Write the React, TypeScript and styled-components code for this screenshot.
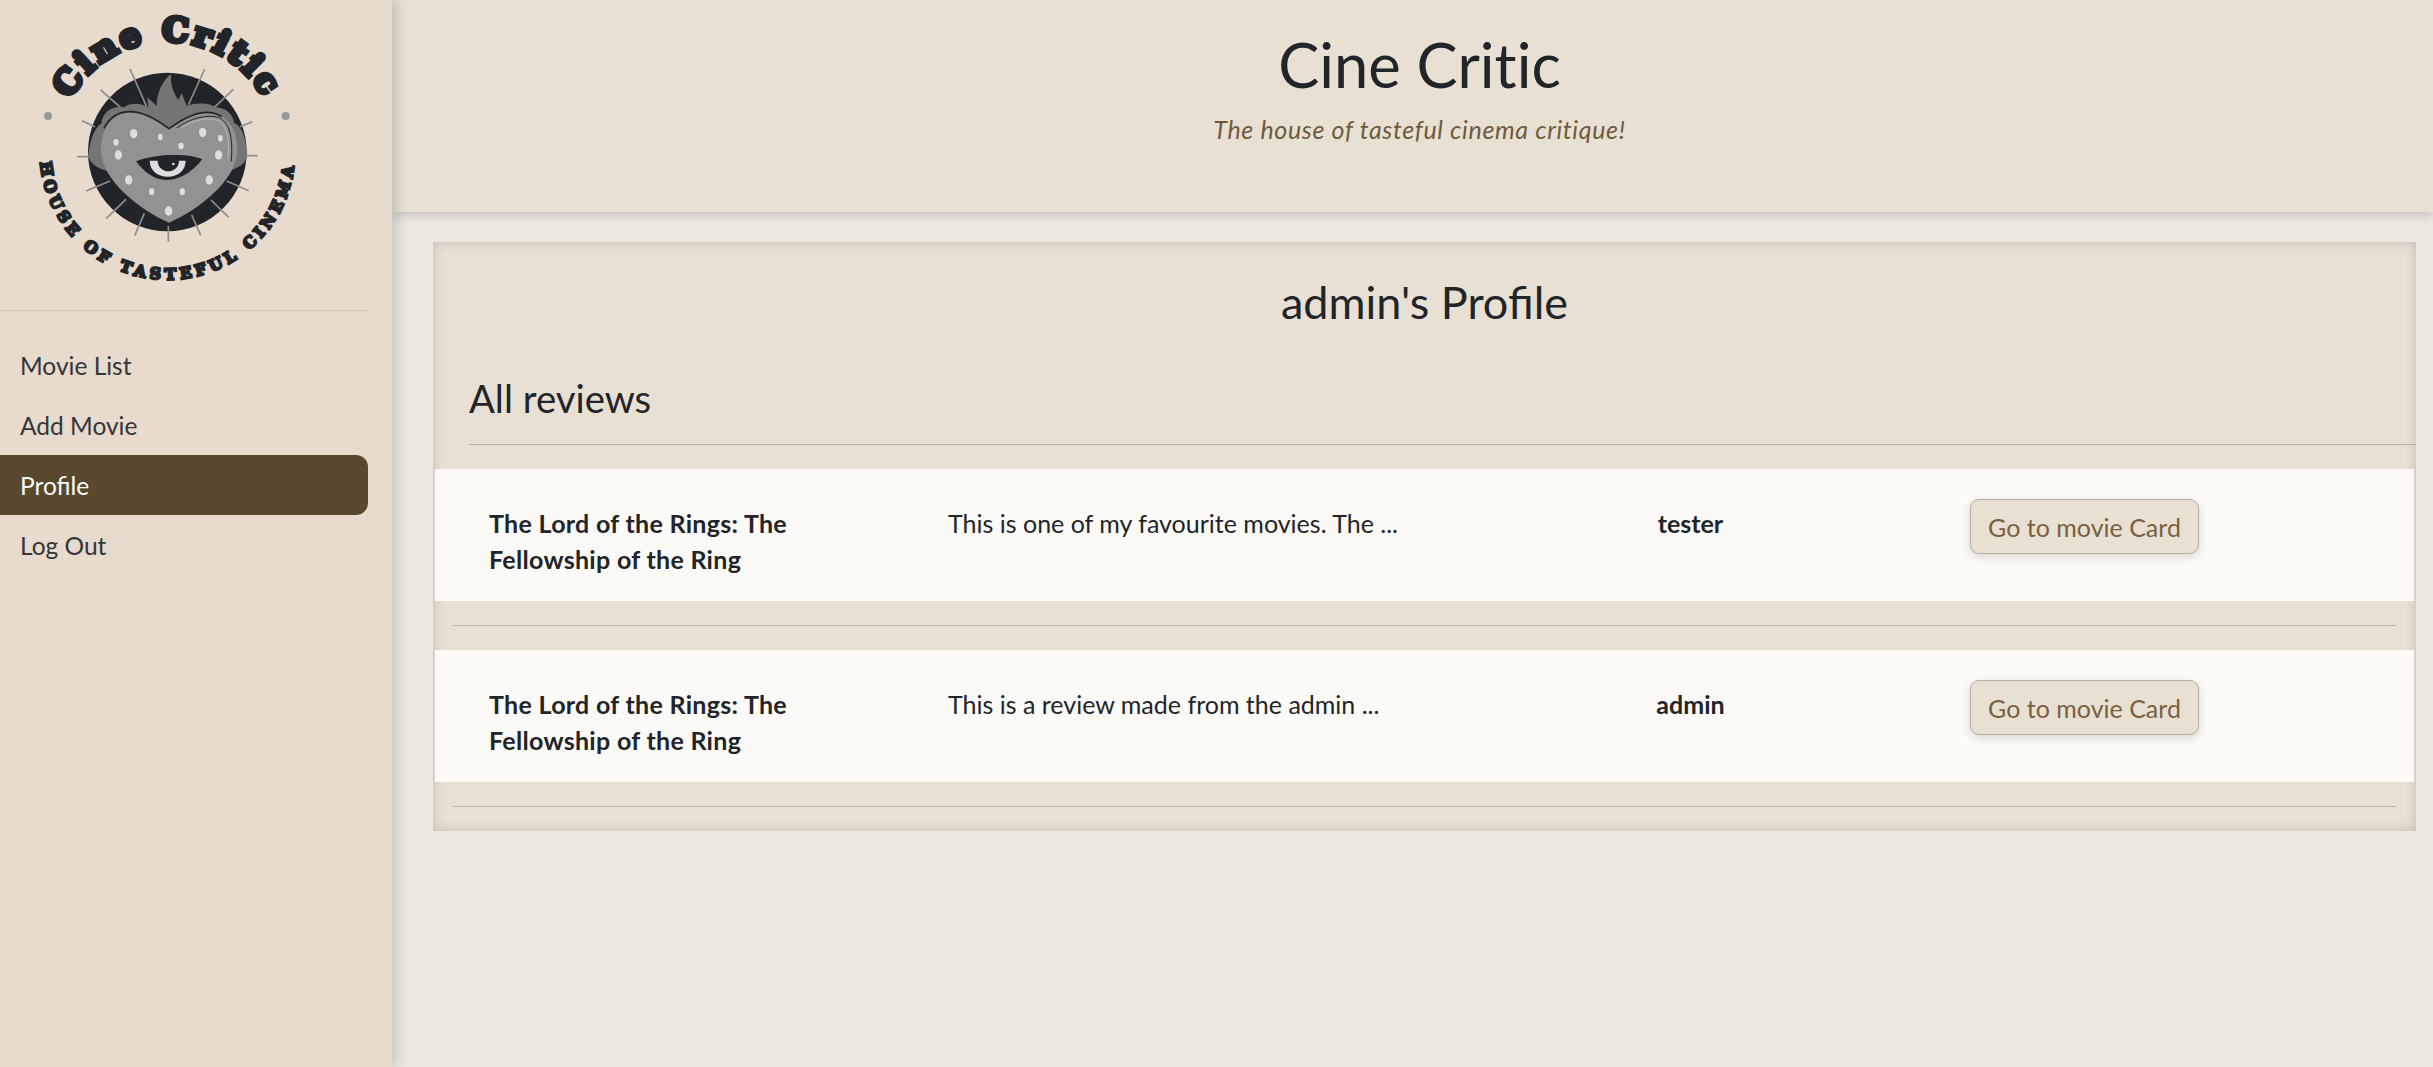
import React from 'react'
import styled, { createGlobalStyle } from 'styled-components'

const GlobalStyle = createGlobalStyle`
  html, body {
    margin: 0;
    padding: 0;
    background: #ebe8e1;
    color: #212529;
    font-family: Lato, "Noto Sans", sans-serif;
    font-size: 25px;
  }
  * { box-sizing: border-box; }
`

const Page = styled.div`
  display: flex;
  min-height: 1067px;
`

const Sidebar = styled.aside`
  flex: 0 0 392px;
  background: #e8dacc;
  padding-right: 24px;
  box-shadow: 4px 0 12px rgba(0, 0, 0, 0.16);
  position: relative;
  z-index: 2;
`

const LogoBox = styled.div`
  height: 311px;
  border-bottom: 1.5px solid #cfc1b0;
  svg { display: block; }
`

const NavList = styled.nav`
  margin-top: 24px;
  display: flex;
  flex-direction: column;
`

const NavItem = styled.a<{ $active?: boolean }>`
  height: 60px;
  padding-left: 20px;
  display: flex;
  align-items: center;
  font-size: 24.5px;
  border-radius: 0 12px 12px 0;
  background: ${(p) => (p.$active ? '#58492e' : 'transparent')};
  color: ${(p) => (p.$active ? '#fbfaf6' : '#33363a')};
`

const Main = styled.main`
  flex: 1;
  min-width: 0;
`

const Header = styled.header`
  height: 212px;
  background: #e8e0d3;
  padding: 26px 0 0 14px;
  text-align: center;
  box-shadow: 0 2px 12px rgba(0, 0, 0, 0.2);
`

const SiteTitle = styled.h1`
  margin: 0;
  font-size: 61.5px;
  line-height: 76px;
  font-weight: 400;
  font-variant-ligatures: none;
`

const Tagline = styled.p`
  margin: 12px 0 0;
  font-style: italic;
  letter-spacing: 0.65px;
  line-height: 30px;
  color: #6f5a3f;
  font-variant-ligatures: none;
`

const Content = styled.div`
  padding: 30px 17px 0 41px;
`

const Panel = styled.section`
  background: #e8e0d3;
  box-shadow: inset 0 0 12px rgba(0, 0, 0, 0.17);
  padding: 0 2px 24px;
`

const ProfileTitle = styled.h2`
  margin: 0;
  padding-top: 34px;
  text-align: center;
  font-size: 45px;
  line-height: 52px;
  font-weight: 400;
`

const SectionTitle = styled.h3`
  margin: 48px 0 0 34px;
  font-size: 38.3px;
  line-height: 44px;
  font-weight: 400;
`

const SectionRule = styled.hr`
  border: 0;
  border-top: 1.5px solid #b8afa2;
  margin: 24px -2px 24px 34px;
`

const ReviewRow = styled.div`
  display: grid;
  grid-template-columns: 459px 463px 559px 1fr;
  padding: 36px 0 24px 54px;
  background: #fbfaf6;
`

const MovieName = styled.div`
  font-weight: 700;
  letter-spacing: 0.3px;
  line-height: 36px;
  padding-right: 120px;
`

const ReviewText = styled.div`
  line-height: 36px;
`

const Author = styled.div`
  font-weight: 700;
  line-height: 36px;
  text-align: center;
`

const CardButton = styled.button`
  align-self: start;
  justify-self: start;
  margin-top: -6px;
  width: 229px;
  height: 55px;
  padding: 0;
  background: #e8e0d3;
  border: 1.5px solid #b8afa2;
  border-radius: 9px;
  box-shadow: 0 3px 10px rgba(0, 0, 0, 0.15);
  color: #7a6040;
  font: inherit;
`

const RowRule = styled.hr`
  border: 0;
  border-top: 1.5px solid #bfb6a8;
  margin: 24px 18px;
`

const FootRule = styled(RowRule)`
  margin-bottom: 0;
`

const spikes = [
  [390, 207, 440, 320], [614, 207, 565, 315], [302, 270, 365, 325], [700, 268, 640, 325],
  [246, 362, 285, 380], [757, 365, 720, 380], [231, 470, 270, 470], [773, 467, 738, 467],
  [258, 573, 330, 543], [746, 572, 680, 543], [319, 655, 378, 598], [686, 652, 633, 600],
  [404, 707, 433, 640], [602, 706, 575, 645], [505, 725, 505, 678],
]

const seeds = [
  [401, 401, 11, 14], [481, 411, 7, 10], [348, 427, 8, 10], [543, 438, 8, 10], [608, 397, 11, 14],
  [661, 415, 7, 10], [355, 465, 11, 14], [656, 465, 11, 14], [386, 540, 11, 14], [628, 540, 11, 14],
  [455, 575, 8, 10], [547, 575, 8, 10], [506, 633, 11, 14],
]

function Logo() {
  return (
    <svg width="368" height="310" viewBox="0 0 1104 930">
      <defs>
        <path id="arcTop" d="M 176 398 A 331 331 0 0 1 828 398" />
        <path id="arcBottom" d="M 122 418 A 382 382 0 1 0 882 418" />
        <clipPath id="eyeClip">
          <path d="M408 484 C 450 465, 560 455, 607 478 C 570 525, 530 540, 500 540 C 465 540, 435 520, 408 484 Z" />
        </clipPath>
      </defs>
      <text fontFamily="'DejaVu Serif', serif" fontWeight="700" fontSize="100" letterSpacing="10" fill="#212529" stroke="#212529" strokeWidth="14">
        <textPath href="#arcTop" startOffset="50%" textAnchor="middle">Cine Critic</textPath>
      </text>
      <text fontFamily="'DejaVu Serif', serif" fontWeight="700" fontSize="47" letterSpacing="13" fill="#212529" stroke="#212529" strokeWidth="7">
        <textPath href="#arcBottom" startOffset="50%" textAnchor="middle">HOUSE OF TASTEFUL CINEMA</textPath>
      </text>
      <circle cx="144" cy="348" r="12" fill="#999" />
      <circle cx="857" cy="348" r="12" fill="#999" />
      <circle cx="502" cy="456" r="238" fill="#212529" />
      {spikes.map(([x1, y1, x2, y2], i) => (
        <line key={i} x1={x1} y1={y1} x2={x2} y2={y2} stroke="#8e8e8e" strokeWidth="5" />
      ))}
      <path
        fill="#757575"
        d="M265 470 C 268 430, 280 385, 305 370 C 305 340, 335 315, 372 322 C 395 305, 425 310, 445 322 L 442 292 L 470 318 C 470 275, 490 240, 513 222 C 510 260, 525 285, 535 300 L 545 280 L 560 318 C 590 305, 630 310, 650 322 C 680 325, 700 345, 702 368 C 730 380, 742 430, 740 475 C 735 490, 715 505, 690 512 L 320 512 C 295 505, 275 495, 265 470 Z"
      />
      <path
        fill="#929292"
        d="M507 385 C 470 355, 430 335, 385 338 C 335 342, 303 385, 303 450 C 303 540, 420 630, 507 668 C 595 630, 712 540, 712 450 C 712 385, 680 342, 630 338 C 585 335, 545 355, 507 385 Z"
      />
      <path fill="none" stroke="#212529" strokeWidth="5" d="M312 385 C 330 350, 360 335, 390 335 C 430 335, 470 358, 507 386 C 545 358, 585 335, 625 337 C 640 338, 655 343, 665 350" />
      <path fill="none" stroke="#212529" strokeWidth="3" d="M530 384 C 570 355, 620 342, 655 352 C 685 365, 700 400, 694 484" />
      <path fill="none" stroke="#adadad" strokeWidth="4" d="M545 382 C 585 358, 625 352, 655 362 C 680 378, 690 420, 684 478" />
      {seeds.map(([cx, cy, rx, ry], i) => (
        <ellipse key={i} cx={cx} cy={cy} rx={rx} ry={ry} fill="#dedede" />
      ))}
      <path fill="#212529" d="M408 484 C 450 465, 560 455, 607 478 C 570 525, 530 540, 500 540 C 465 540, 435 520, 408 484 Z" />
      <g clipPath="url(#eyeClip)">
        <path fill="#dcdcdc" d="M449 482 L 557 482 C 557 510, 535 530, 503 530 C 472 530, 449 510, 449 482 Z" />
        <circle cx="505" cy="482" r="32" fill="#212529" />
        <circle cx="520" cy="492" r="4" fill="#dcdcdc" />
      </g>
    </svg>
  )
}

const reviews = [
  { id: 1, movie: 'The Lord of the Rings: The Fellowship of the Ring', text: 'This is one of my favourite movies. The ...', author: 'tester' },
  { id: 2, movie: 'The Lord of the Rings: The Fellowship of the Ring', text: 'This is a review made from the admin ...', author: 'admin' },
]

const navItems = ['Movie List', 'Add Movie', 'Profile', 'Log Out']

export default function App() {
  return (
    <Page>
      <GlobalStyle />
      <Sidebar>
        <LogoBox>
          <Logo />
        </LogoBox>
        <NavList>
          {navItems.map((item) => (
            <NavItem key={item} $active={item === 'Profile'}>
              {item}
            </NavItem>
          ))}
        </NavList>
      </Sidebar>
      <Main>
        <Header>
          <SiteTitle>Cine Critic</SiteTitle>
          <Tagline>The house of tasteful cinema critique!</Tagline>
        </Header>
        <Content>
          <Panel>
            <ProfileTitle>admin's Profile</ProfileTitle>
            <SectionTitle>All reviews</SectionTitle>
            <SectionRule />
            {reviews.map((review, i) => (
              <React.Fragment key={review.id}>
                <ReviewRow>
                  <MovieName>{review.movie}</MovieName>
                  <ReviewText>{review.text}</ReviewText>
                  <Author>{review.author}</Author>
                  <CardButton>Go to movie Card</CardButton>
                </ReviewRow>
                {i === reviews.length - 1 ? <FootRule /> : <RowRule />}
              </React.Fragment>
            ))}
          </Panel>
        </Content>
      </Main>
    </Page>
  )
}
